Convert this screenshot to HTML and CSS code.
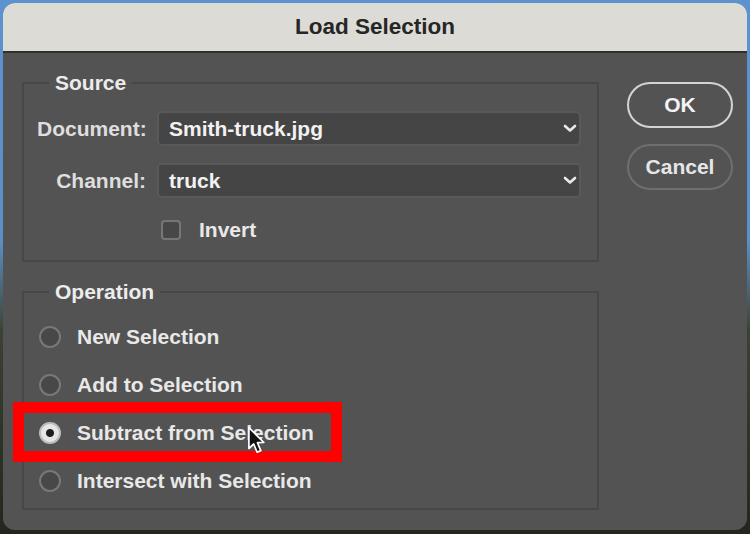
FILE: index.html
```html
<!DOCTYPE html>
<html>
<head>
<meta charset="utf-8">
<link rel="stylesheet" href="styles.css">
</head>
<body>
<div class="dialog">
  <div class="titlebar">Load Selection</div>
  <div class="content">
    <div class="groups">
      <fieldset class="group source">
        <legend>Source</legend>
        <div class="form">
          <label class="lbl">Document:</label>
          <div class="select"><span>Smith-truck.jpg</span>
            <svg class="chev" width="14" height="9" viewBox="0 0 14 9"><path d="M2 2 L7 6.5 L12 2" fill="none" stroke="#eaeaea" stroke-width="2.6" stroke-linecap="round" stroke-linejoin="round"/></svg>
          </div>
          <label class="lbl">Channel:</label>
          <div class="select"><span>truck</span>
            <svg class="chev" width="14" height="9" viewBox="0 0 14 9"><path d="M2 2 L7 6.5 L12 2" fill="none" stroke="#eaeaea" stroke-width="2.6" stroke-linecap="round" stroke-linejoin="round"/></svg>
          </div>
          <div></div>
          <div class="check-row"><span class="checkbox"></span><span>Invert</span></div>
        </div>
      </fieldset>
      <fieldset class="group operation">
        <legend>Operation</legend>
        <div class="radios">
          <div class="radio-row"><span class="radio"></span><span>New Selection</span></div>
          <div class="radio-row"><span class="radio"></span><span>Add to Selection</span></div>
          <div class="radio-row marked"><span class="radio on"></span><span>Subtract from Selection</span>
            <span class="highlight"></span>
            <svg class="cursor" width="22" height="30" viewBox="0 0 20 28"><path d="M1.5 1.5 L1.5 21 L6 16.8 L9.2 24.5 L12.6 23 L9.5 15.6 L15.5 15.4 Z" fill="#111" stroke="#fff" stroke-width="1.6" stroke-linejoin="round"/></svg>
          </div>
          <div class="radio-row"><span class="radio"></span><span>Intersect with Selection</span></div>
        </div>
      </fieldset>
    </div>
    <div class="buttons">
      <div class="btn ok">OK</div>
      <div class="btn cancel">Cancel</div>
    </div>
  </div>
</div>
</body>
</html>
```
FILE: styles.css
```css
html, body {
  margin: 0;
  padding: 0;
}
body {
  width: 750px;
  height: 534px;
  overflow: hidden;
  background: linear-gradient(to bottom, #5b93d0 0%, #5a90c8 45%, #3b4232 62%, #23261e 100%);
  font-family: "Liberation Sans", Arial, sans-serif;
  font-weight: bold;
  font-size: 21px;
  color: #e8e8e8;
}
.dialog {
  margin: 3px 0 0 3px;
  width: 744px;
  height: 527px;
  border-radius: 12px;
  overflow: hidden;
  background: #535353;
  display: flex;
  flex-direction: column;
}
.titlebar {
  flex: none;
  height: 50px;
  box-sizing: border-box;
  background: #dcdbd5;
  border-bottom: 2px solid #2f2f2f;
  color: #262626;
  font-size: 22.5px;
  display: flex;
  align-items: center;
  justify-content: center;
  padding-bottom: 1px;
}
.content {
  display: flex;
  padding: 18px 14px 0 19px;
}
.groups {
  width: 577px;
  display: flex;
  flex-direction: column;
  gap: 18px;
}
.group {
  margin: 0;
  border: 2px solid #474747;
  padding: 0;
  min-width: 0;
}
.group legend {
  margin-left: 25px;
  padding: 0 6px;
  line-height: 24px;
  color: #ececec;
}
.form {
  display: grid;
  grid-template-columns: 109px 424px;
  column-gap: 11px;
  row-gap: 17px;
  align-items: center;
  padding: 16px 16px 20px 13px;
}
.form .check-row {
  margin-top: 5px;
}
.lbl {
  text-align: right;
  white-space: nowrap;
  color: #dedede;
}
.select {
  height: 35px;
  box-sizing: border-box;
  background: #454545;
  border: 2px solid #595959;
  border-radius: 5px;
  display: flex;
  align-items: center;
  justify-content: space-between;
  padding: 0 2px 0 10px;
  color: #f2f2f2;
}
.chev {
  display: block;
}
.check-row {
  display: flex;
  align-items: center;
  gap: 18px;
  padding-left: 4px;
  height: 20px;
}
.checkbox {
  width: 20px;
  height: 20px;
  box-sizing: border-box;
  border: 2px solid #767676;
  border-radius: 4px;
  background: #474747;
}
.radios {
  display: flex;
  flex-direction: column;
  gap: 20px;
  padding: 19px 0 13px 15px;
}
.radio-row {
  position: relative;
  display: flex;
  align-items: center;
  gap: 16px;
  height: 28px;
  color: #e8e8e8;
}
.radio {
  width: 22px;
  height: 22px;
  box-sizing: border-box;
  border: 2px solid #787878;
  border-radius: 50%;
  background: #484848;
  flex: none;
}
.radio.on {
  background: radial-gradient(circle, #1e1e1e 0 3.5px, #e6e6e6 4.5px);
  border-color: #bdbdbd;
}
.highlight {
  position: absolute;
  left: -26px;
  top: -17px;
  width: 329px;
  height: 60px;
  box-sizing: border-box;
  border: 11px solid #ff0000;
}
.cursor {
  position: absolute;
  left: 208px;
  top: 7px;
}
.buttons {
  margin-left: 28px;
  margin-top: 11px;
  display: flex;
  flex-direction: column;
  gap: 16px;
}
.btn {
  width: 106px;
  height: 46px;
  box-sizing: border-box;
  border-radius: 23px;
  display: flex;
  align-items: center;
  justify-content: center;
  background: #535353;
}
.btn.ok {
  border: 2px solid #d4d4d4;
  color: #f4f4f4;
}
.btn.cancel {
  border: 2px solid #6f6f6f;
  color: #e6e6e6;
}
```
